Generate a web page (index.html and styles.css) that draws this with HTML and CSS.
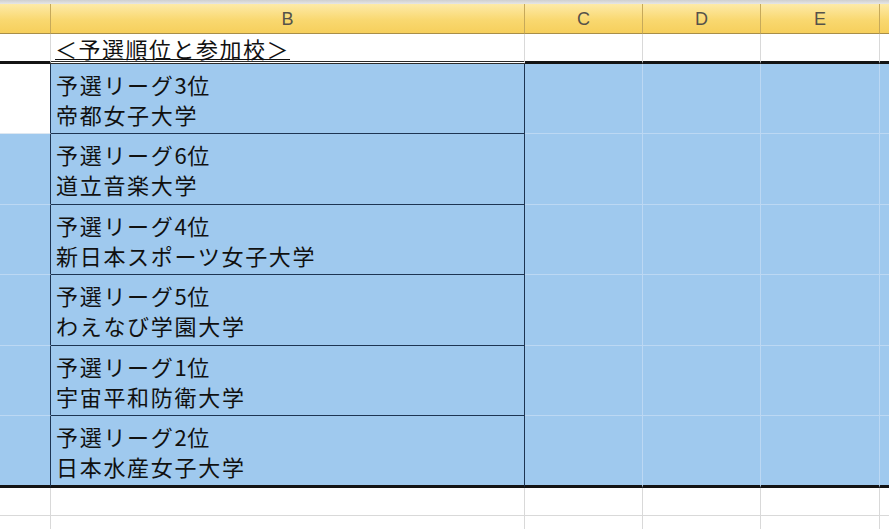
FILE: index.html
```html
<!DOCTYPE html>
<html lang="ja">
<head>
<meta charset="utf-8">
<title>予選順位と参加校</title>
<link rel="stylesheet" href="styles.css">
</head>
<body>
<div class="topband"></div>
<div class="sheet">
  <div class="hd">&nbsp;</div>
  <div class="hd">B</div>
  <div class="hd">C</div>
  <div class="hd">D</div>
  <div class="hd">E</div>
  <div class="hd last"></div>

  <div class="c r1"></div>
  <div class="c r1 title-cell"><span class="title">＜予選順位と参加校＞</span></div>
  <div class="c r1"></div>
  <div class="c r1"></div>
  <div class="c r1"></div>
  <div class="c r1 last"></div>

  <div class="c sel a white"></div>
  <div class="c sel b"><span>予選リーグ<span class="num">3</span>位</span><span>帝都女子大学</span></div>
  <div class="c sel"></div><div class="c sel"></div><div class="c sel"></div><div class="c sel last"></div>

  <div class="c sel a"></div>
  <div class="c sel b"><span>予選リーグ<span class="num">6</span>位</span><span>道立音楽大学</span></div>
  <div class="c sel"></div><div class="c sel"></div><div class="c sel"></div><div class="c sel last"></div>

  <div class="c sel a"></div>
  <div class="c sel b"><span>予選リーグ<span class="num">4</span>位</span><span>新日本スポーツ女子大学</span></div>
  <div class="c sel"></div><div class="c sel"></div><div class="c sel"></div><div class="c sel last"></div>

  <div class="c sel a"></div>
  <div class="c sel b"><span>予選リーグ<span class="num">5</span>位</span><span>わえなび学園大学</span></div>
  <div class="c sel"></div><div class="c sel"></div><div class="c sel"></div><div class="c sel last"></div>

  <div class="c sel a"></div>
  <div class="c sel b"><span>予選リーグ<span class="num">1</span>位</span><span>宇宙平和防衛大学</span></div>
  <div class="c sel"></div><div class="c sel"></div><div class="c sel"></div><div class="c sel last"></div>

  <div class="c sel a end"></div>
  <div class="c sel b end"><span>予選リーグ<span class="num">2</span>位</span><span>日本水産女子大学</span></div>
  <div class="c sel end"></div><div class="c sel end"></div><div class="c sel end"></div><div class="c sel end last"></div>

  <div class="c"></div><div class="c"></div><div class="c"></div><div class="c"></div><div class="c"></div><div class="c last"></div>
  <div class="c"></div><div class="c"></div><div class="c"></div><div class="c"></div><div class="c"></div><div class="c last"></div>
</div>
</body>
</html>
```
FILE: styles.css
```css
html, body {
  margin: 0;
  padding: 0;
  background: #ffffff;
  overflow: hidden;
}
body {
  width: 889px;
  height: 529px;
  font-family: "Noto Sans CJK JP", "Liberation Sans", sans-serif;
  color: #111;
}
.topband {
  height: 4px;
  background: linear-gradient(#cfcfcf, #e6e6e6);
}
.sheet {
  display: grid;
  grid-template-columns: 51px 474px 118px 118px 119px 1fr;
  grid-template-rows: 30px 30px 70px 71px 70px 71px 70px 72px 28px 28px;
}
.hd {
  box-sizing: border-box;
  background: linear-gradient(#fdeaa8, #f9d870 55%, #f6cf5c);
  border-right: 1px solid #c6a95a;
  border-bottom: 1px solid #a88e48;
  font-family: "Liberation Sans", sans-serif;
  font-size: 18px;
  color: #55524a;
  display: flex;
  align-items: center;
  justify-content: center;
  padding-top: 1px;
}
.c {
  box-sizing: border-box;
  border-right: 1px solid #d9d9d9;
  border-bottom: 1px solid #d9d9d9;
  background: #fff;
}
.last { border-right: none; }
.r1 {
  border-bottom: 3px solid #141414;
}
.title-cell {
  border-bottom: 3px double #2b2b2b;
  padding-left: 4px;
  display: flex;
  align-items: flex-end;
}
.title {
  font-size: 22px;
  line-height: 26px;
  letter-spacing: 1.5px;
  text-decoration: underline;
  text-decoration-thickness: 1px;
  text-underline-offset: 1px;
  white-space: nowrap;
}
.sel {
  background: #9fc9ee;
  border-right-color: #bcd8f3;
  border-bottom-color: #bcd8f3;
}
.sel.a { border-right: 1px solid #1d3452; }
.sel.white { background: #ffffff; border-bottom-color: #dde7f1; }
.sel.b {
  border-right: 1px solid #1d3452;
  border-bottom: 1px solid #1d3452;
  padding-left: 5px;
  display: flex;
  flex-direction: column;
  justify-content: center;
  font-size: 22px;
  line-height: 30px;
  letter-spacing: 1.7px;
  white-space: nowrap;
}
.num {
  letter-spacing: 0.5px;
}
.sel.end, .sel.b.end {
  border-bottom: 3px solid #141414;
}
```
